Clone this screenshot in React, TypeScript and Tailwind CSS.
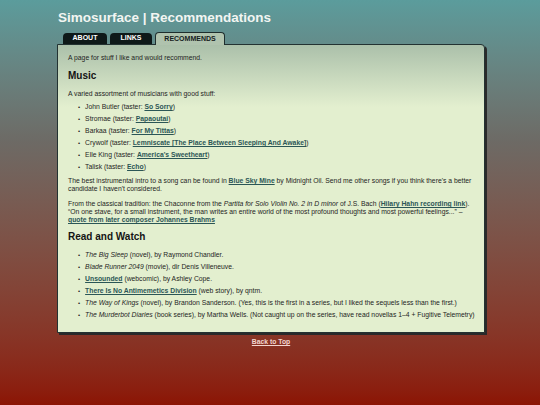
import React from "react";

const linkCls = "font-bold text-[#2b5656] underline";

function L({ children }: { children: React.ReactNode }) {
  return <a className={linkCls}>{children}</a>;
}

function Item({ children }: { children: React.ReactNode }) {
  return (
    <li className="flex items-start gap-[5px]">
      <span className="text-[6px] text-[#1e1e1e]">•</span>
      <span>{children}</span>
    </li>
  );
}

const music: [string, string][] = [
  ["John Butler", "So Sorry"],
  ["Stromae", "Papaoutai"],
  ["Barkaa", "For My Tittas"],
  ["Crywolf", "Lemniscate [The Place Between Sleeping And Awake]"],
  ["Elle King", "America's Sweetheart"],
  ["Talisk", "Echo"],
];

export default function App() {
  return (
    <div
      className="w-[540px] h-[405px] overflow-hidden bg-linear-to-b from-[#5b9c9c] via-[#6d6a65] via-35% to-[#8c1404] text-[#1e1e1e]"
      style={{ fontFamily: '"Liberation Sans", Arial, sans-serif' }}
    >
      <div className="ml-[57px] w-[428px] pt-[10px]">
        <h1 className="pl-[1px] text-[13.5px] leading-[16px] font-bold text-[#f2f5f2]">
          Simosurface | Recommendations
        </h1>

        {/* tabs */}
        <div className="flex items-end gap-[3px] pl-[6px] mt-[6px] h-[12px] relative z-10">
          <div className="h-[11px] w-[44px] rounded-t-[4px] bg-[#0e1919] text-[7px] font-bold text-white flex items-center justify-center">
            ABOUT
          </div>
          <div className="h-[11px] w-[42px] rounded-t-[4px] bg-[#0e1919] text-[7px] font-bold text-white flex items-center justify-center">
            LINKS
          </div>
          <div className="h-[13px] -mb-[1px] w-[70px] rounded-t-[4px] border border-b-0 border-[#1e2e2e] bg-[#b0c3ae] text-[7px] font-bold text-[#152020] flex items-center justify-center">
            RECOMMENDS
          </div>
        </div>

        {/* panel */}
        <div className="rounded-tr-[4px] border border-[#233232] shadow-[2px_2px_0_#2a2a2a] bg-[linear-gradient(to_bottom,#abc0aa_0px,#e3efcf_62px)] pl-[10px] pr-[8px] pt-[9px] pb-[13px] text-[6.8px] leading-[8px]">
          <p>A page for stuff I like and would recommend.</p>
          <h2 className="mt-[8px] text-[10px] leading-[12px] font-bold text-[#141414]">Music</h2>
          <p className="mt-[8px]">A varied assortment of musicians with good stuff:</p>
          <ul className="mt-[5px] pl-[10px] flex flex-col gap-[4px]">
            {music.map(([artist, song]) => (
              <Item key={artist}>
                {artist} (taster: <L>{song}</L>)
              </Item>
            ))}
          </ul>
          <p className="mt-[6px]">
            The best instrumental intro to a song can be found in <L>Blue Sky Mine</L> by Midnight Oil. Send
            me other songs if you think there's a better candidate I haven't considered.
          </p>
          <p className="mt-[7px]">
            From the classical tradition: the Chaconne from the{" "}
            <i>Partita for Solo Violin No. 2 in D minor</i> of J.S. Bach (<L>Hilary Hahn recording link</L>).
            “On one stave, for a small instrument, the man writes an entire world of the most profound
            thoughts and most powerful feelings...” – <L>quote from later composer Johannes Brahms</L>
          </p>
          <h2 className="mt-[7px] text-[10px] leading-[12px] font-bold text-[#141414]">Read and Watch</h2>
          <ul className="mt-[8px] pl-[10px] flex flex-col gap-[4px]">
            <Item>
              <i>The Big Sleep</i> (novel), by Raymond Chandler.
            </Item>
            <Item>
              <i>Blade Runner 2049</i> (movie), dir Denis Villeneuve.
            </Item>
            <Item>
              <L>Unsounded</L> (webcomic), by Ashley Cope.
            </Item>
            <Item>
              <L>There Is No Antimemetics Division</L> (web story), by qntm.
            </Item>
            <Item>
              <i>The Way of Kings</i> (novel), by Brandon Sanderson. (Yes, this is the first in a series, but I
              liked the sequels less than the first.)
            </Item>
            <Item>
              <i>The Murderbot Diaries</i> (book series), by Martha Wells. (Not caught up on the series, have
              read novellas 1–4 + Fugitive Telemetry)
            </Item>
          </ul>
        </div>

        <div className="mt-[5px] text-center text-[6.8px] leading-[8px]">
          <a className="font-bold text-[#f3d6d0] underline">Back to Top</a>
        </div>
      </div>
    </div>
  );
}
